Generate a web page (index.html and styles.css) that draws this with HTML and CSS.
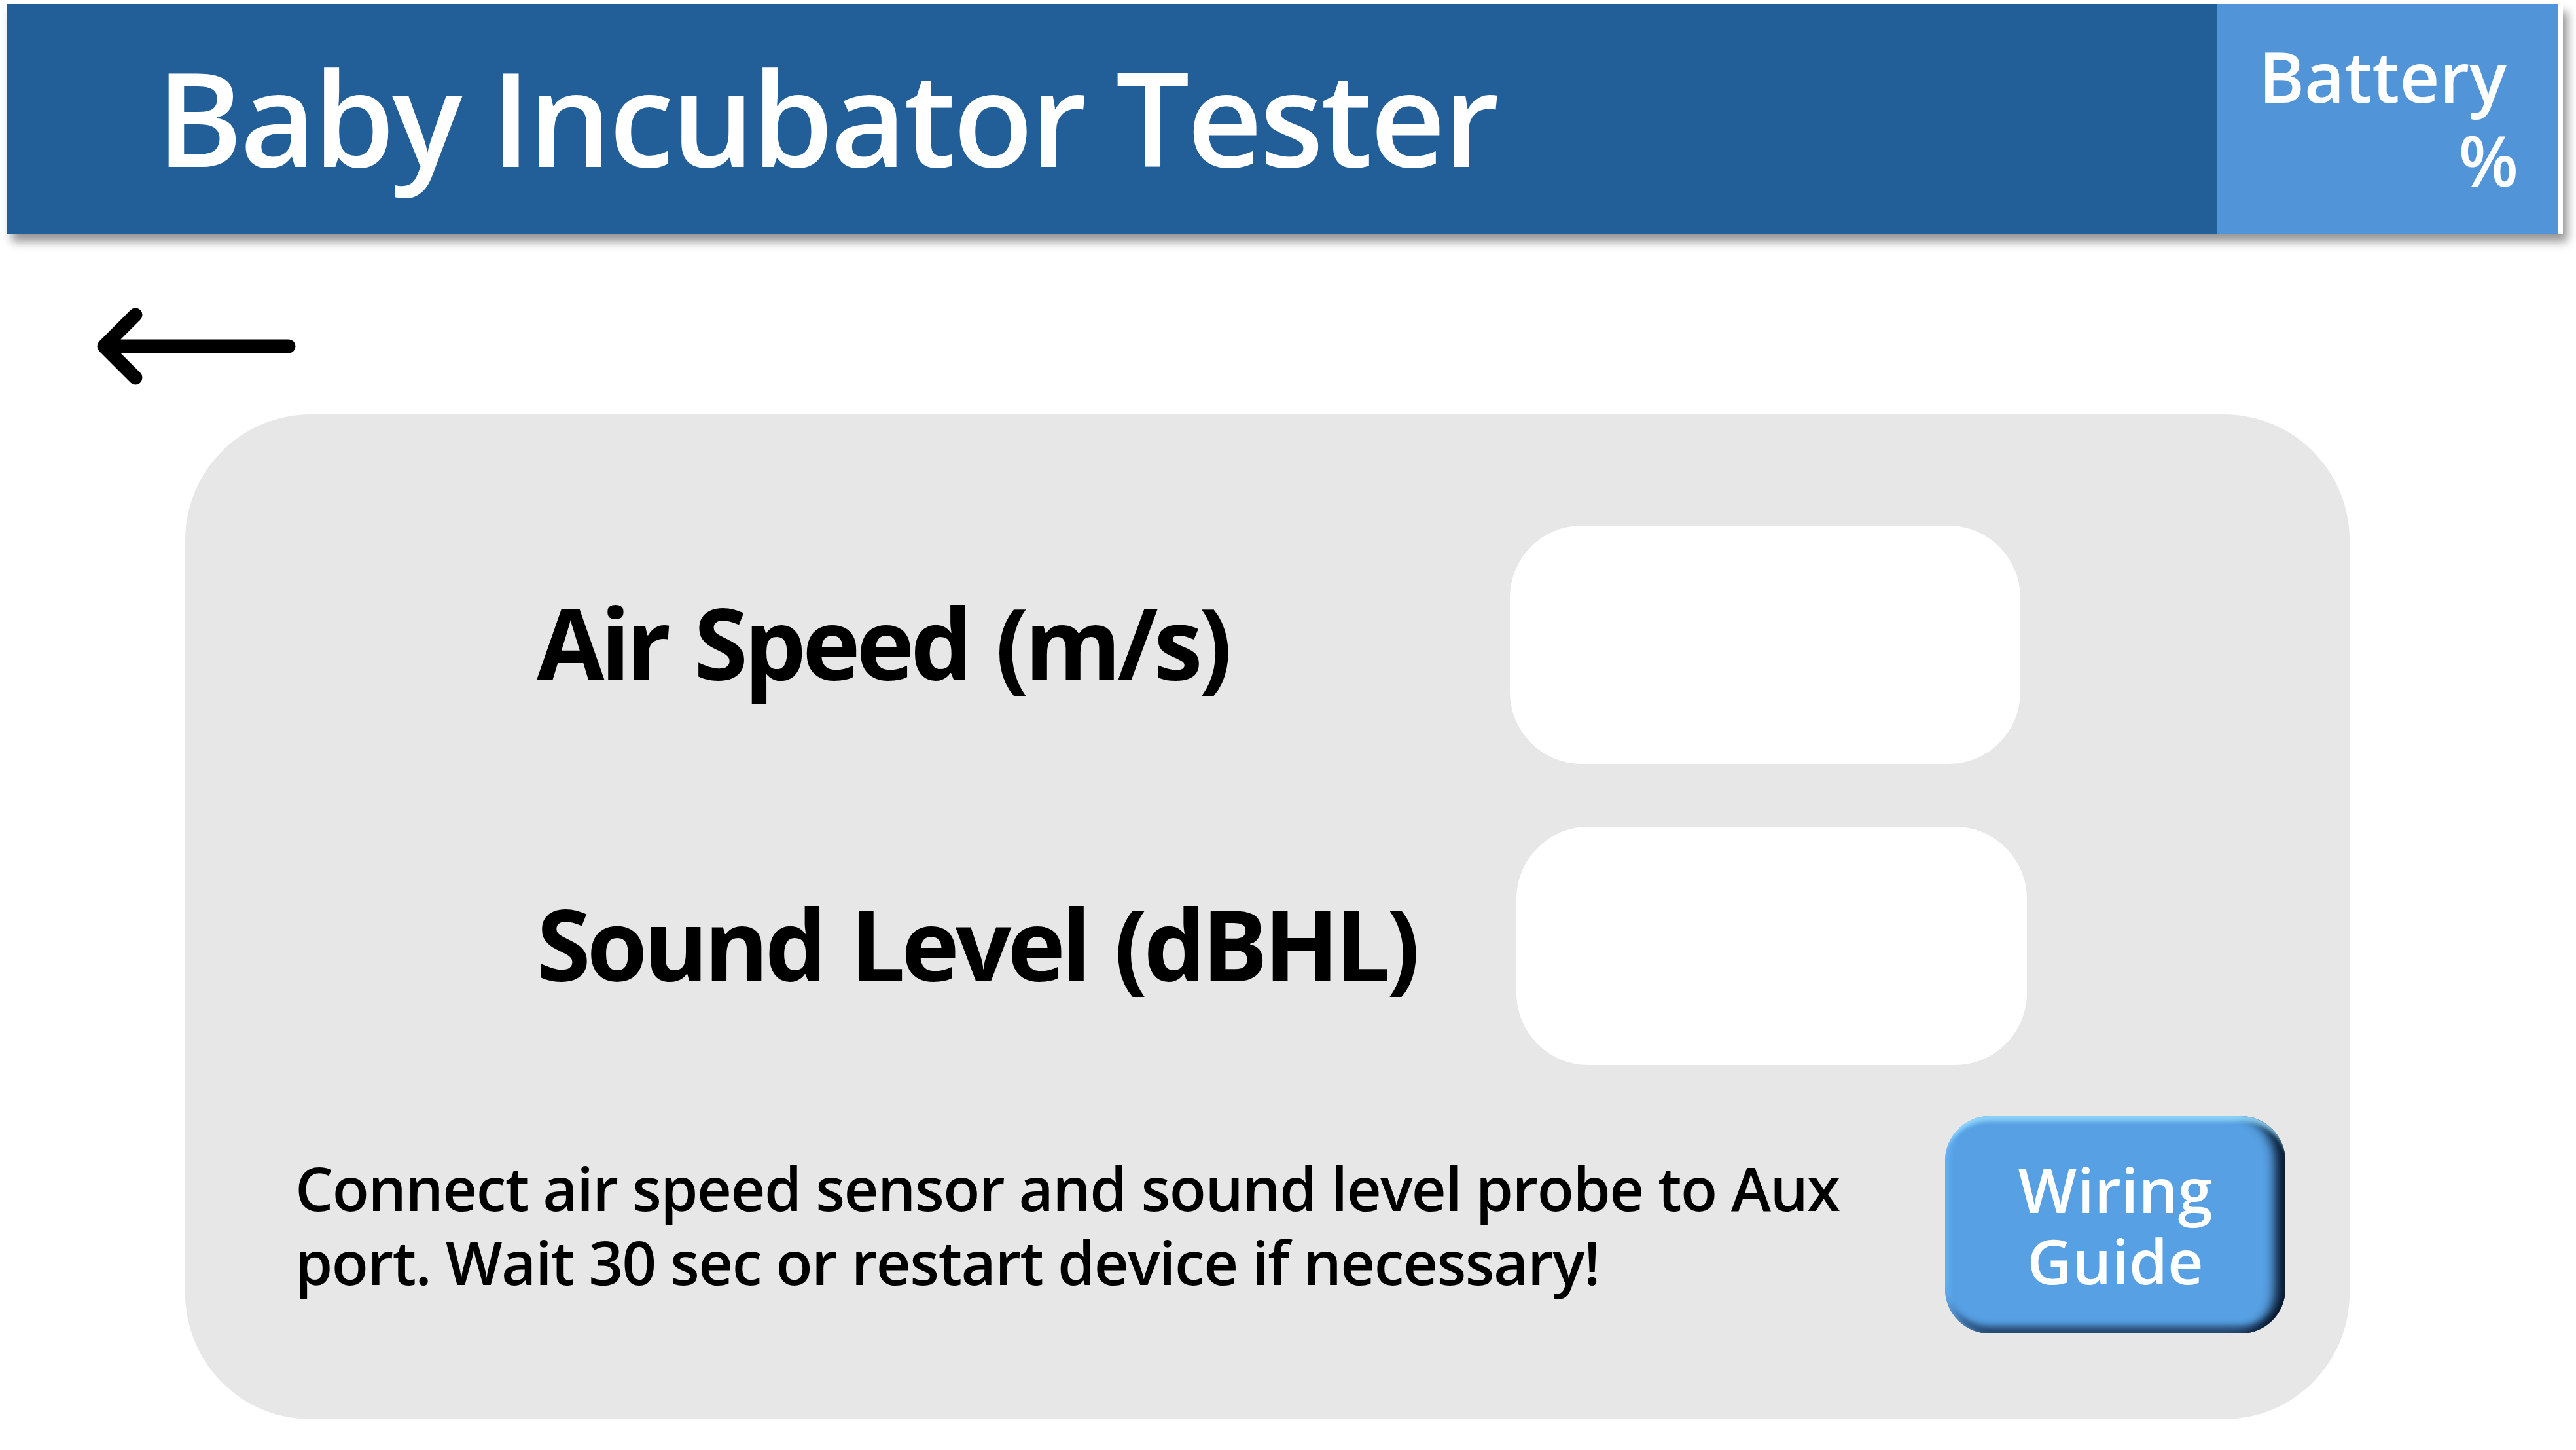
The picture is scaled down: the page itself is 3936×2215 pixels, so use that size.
FILE: index.html
```html
<!DOCTYPE html>
<html lang="en">
<head>
<meta charset="utf-8">
<title>Baby Incubator Tester</title>
<link rel="stylesheet" href="styles.css">
</head>
<body>
<header class="topbar">
  <h1 class="title">Baby Incubator Tester</h1>
  <div class="battery">
    <span class="battery-label">Battery</span>
    <span class="battery-value">%</span>
  </div>
</header>

<a class="back" href="#" aria-label="Back">
  <svg class="back-icon" width="324" height="128" viewBox="0 0 324 128">
    <path d="M303 64 H21 M69 16 L21 64 L69 112" fill="none" stroke="#000" stroke-width="21" stroke-linecap="round" stroke-linejoin="round"/>
  </svg>
</a>

<main class="panel">
  <div class="reading">
    <div class="reading-label">Air Speed (m/s)</div>
    <div class="reading-box"></div>
  </div>
  <div class="reading reading-second">
    <div class="reading-label">Sound Level (dBHL)</div>
    <div class="reading-box"></div>
  </div>
  <div class="footer-row">
    <p class="hint">Connect air speed sensor and sound level probe to Aux<br>port. Wait 30 sec or restart device if necessary!</p>
    <button class="wiring"><span class="wiring-line">Wiring</span><span class="wiring-line">Guide</span></button>
  </div>
</main>
</body>
</html>
```

FILE: styles.css
```css
html, body {
  margin: 0;
  padding: 0;
  background: #ffffff;
}

body {
  width: 3936px;
  height: 2215px;
  overflow: hidden;
  font-family: "Open Sans", "Noto Sans", "DejaVu Sans", sans-serif;
}

.topbar {
  display: flex;
  margin: 6px 0 0 11px;
  width: 3905px;
  height: 351px;
  background: #ffffff;
  box-shadow: 7px 12px 14px rgba(0, 0, 0, 0.42);
}

.title {
  flex: 0 0 3377px;
  box-sizing: border-box;
  margin: 0;
  padding: 72px 0 0 228px;
  background: #225f99;
  color: #ffffff;
  font-size: 200px;
  font-weight: 600;
  line-height: 1;
  letter-spacing: -4px;
  white-space: nowrap;
}

.battery {
  flex: 0 0 520px;
  box-sizing: border-box;
  display: flex;
  flex-direction: column;
  align-items: flex-end;
  padding: 46px 60px 0 0;
  background: #5195d8;
  color: #ffffff;
  font-size: 106px;
  font-weight: 600;
  line-height: 128px;
}

.battery-label {
  padding-right: 18px;
}

.back {
  display: block;
  width: 324px;
  height: 128px;
  margin: 108px 0 0 138px;
}

.back-icon {
  display: block;
}

.panel {
  box-sizing: border-box;
  width: 3307px;
  height: 1535px;
  margin: 40px 0 0 283px;
  padding-top: 170px;
  background: #e7e7e7;
  border-radius: 192px;
}

.reading {
  display: grid;
  grid-template-columns: 1487px 780px;
  align-items: center;
  padding-left: 537px;
}

.reading-second {
  margin-top: 96px;
}

.reading-second .reading-box {
  margin-left: 10px;
}

.reading-label {
  font-size: 150px;
  font-weight: 700;
  line-height: 1;
  color: #000000;
  letter-spacing: -6px;
  word-spacing: 8px;
  white-space: nowrap;
  padding-bottom: 9px;
}

.reading-box {
  width: 780px;
  height: 364px;
  background: #ffffff;
  border-radius: 110px;
}

.footer-row {
  display: flex;
  align-items: center;
  justify-content: space-between;
  margin-top: 78px;
  padding: 0 98px 0 168px;
}

.hint {
  margin: 0;
  font-size: 92px;
  font-weight: 600;
  line-height: 113px;
  color: #000000;
  letter-spacing: -1.5px;
  white-space: nowrap;
}

.wiring {
  flex: 0 0 520px;
  display: flex;
  flex-direction: column;
  align-items: center;
  justify-content: center;
  height: 332px;
  padding: 0;
  border: none;
  border-radius: 68px;
  background: #56a0e3;
  color: #ffffff;
  font-family: "Open Sans", "Noto Sans", "DejaVu Sans", sans-serif;
  font-size: 95px;
  font-weight: 600;
  line-height: 109px;
  box-shadow:
    inset 0 16px 6px -8px rgba(150, 222, 255, 0.85),
    inset 12px 0 8px -6px rgba(110, 185, 255, 0.7),
    inset -22px 0 16px -6px rgba(5, 20, 40, 0.95),
    inset 0 -18px 10px -6px rgba(30, 55, 90, 0.75);
}

.wiring-line {
  display: block;
}
```
